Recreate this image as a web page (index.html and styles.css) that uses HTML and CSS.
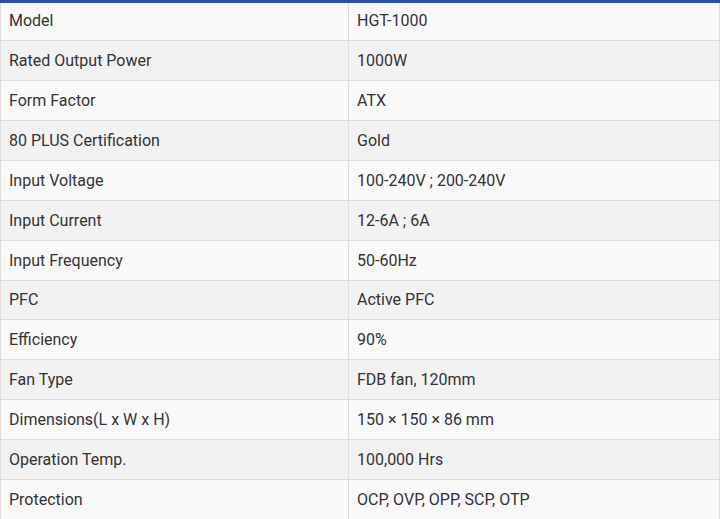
FILE: index.html
```html
<!DOCTYPE html>
<html>
<head>
<meta charset="utf-8">
<link rel="stylesheet" href="styles.css">
</head>
<body>
<table class="spec">
<tbody>
<tr class="first"><td>Model</td><td>HGT-1000</td></tr>
<tr><td>Rated Output Power</td><td>1000W</td></tr>
<tr><td>Form Factor</td><td>ATX</td></tr>
<tr><td>80 PLUS Certification</td><td>Gold</td></tr>
<tr><td>Input Voltage</td><td>100-240V ; 200-240V</td></tr>
<tr><td>Input Current</td><td>12-6A ; 6A</td></tr>
<tr><td>Input Frequency</td><td>50-60Hz</td></tr>
<tr><td>PFC</td><td>Active PFC</td></tr>
<tr><td>Efficiency</td><td>90%</td></tr>
<tr><td>Fan Type</td><td>FDB fan, 120mm</td></tr>
<tr><td>Dimensions(L x W x H)</td><td>150 × 150 × 86 mm</td></tr>
<tr><td>Operation Temp.</td><td>100,000 Hrs</td></tr>
<tr><td>Protection</td><td>OCP, OVP, OPP, SCP, OTP</td></tr>
</tbody>
</table>
</body>
</html>
```
FILE: styles.css
```css
html, body {
  margin: 0;
  padding: 0;
  background: #ffffff;
}
.spec {
  width: 720px;
  border-collapse: collapse;
  border-top: 3px solid #2e51a3;
  font-family: Roboto, "Liberation Sans", sans-serif;
  font-size: 16px;
  color: #333333;
  table-layout: fixed;
}
.spec td {
  height: 37.93px;
  padding: 1px 8px 0;
  border: 1px solid #dddddd;
  border-top: none;
  vertical-align: middle;
  line-height: 20px;
}
.spec .first td {
  height: 35px;
  padding: 0 8px 2px;
}
.spec td:first-child {
  width: 331px;
}
.spec tr:nth-child(odd) td {
  background: #f9f9f9;
}
.spec tr:nth-child(even) td {
  background: #f2f2f2;
}
```
